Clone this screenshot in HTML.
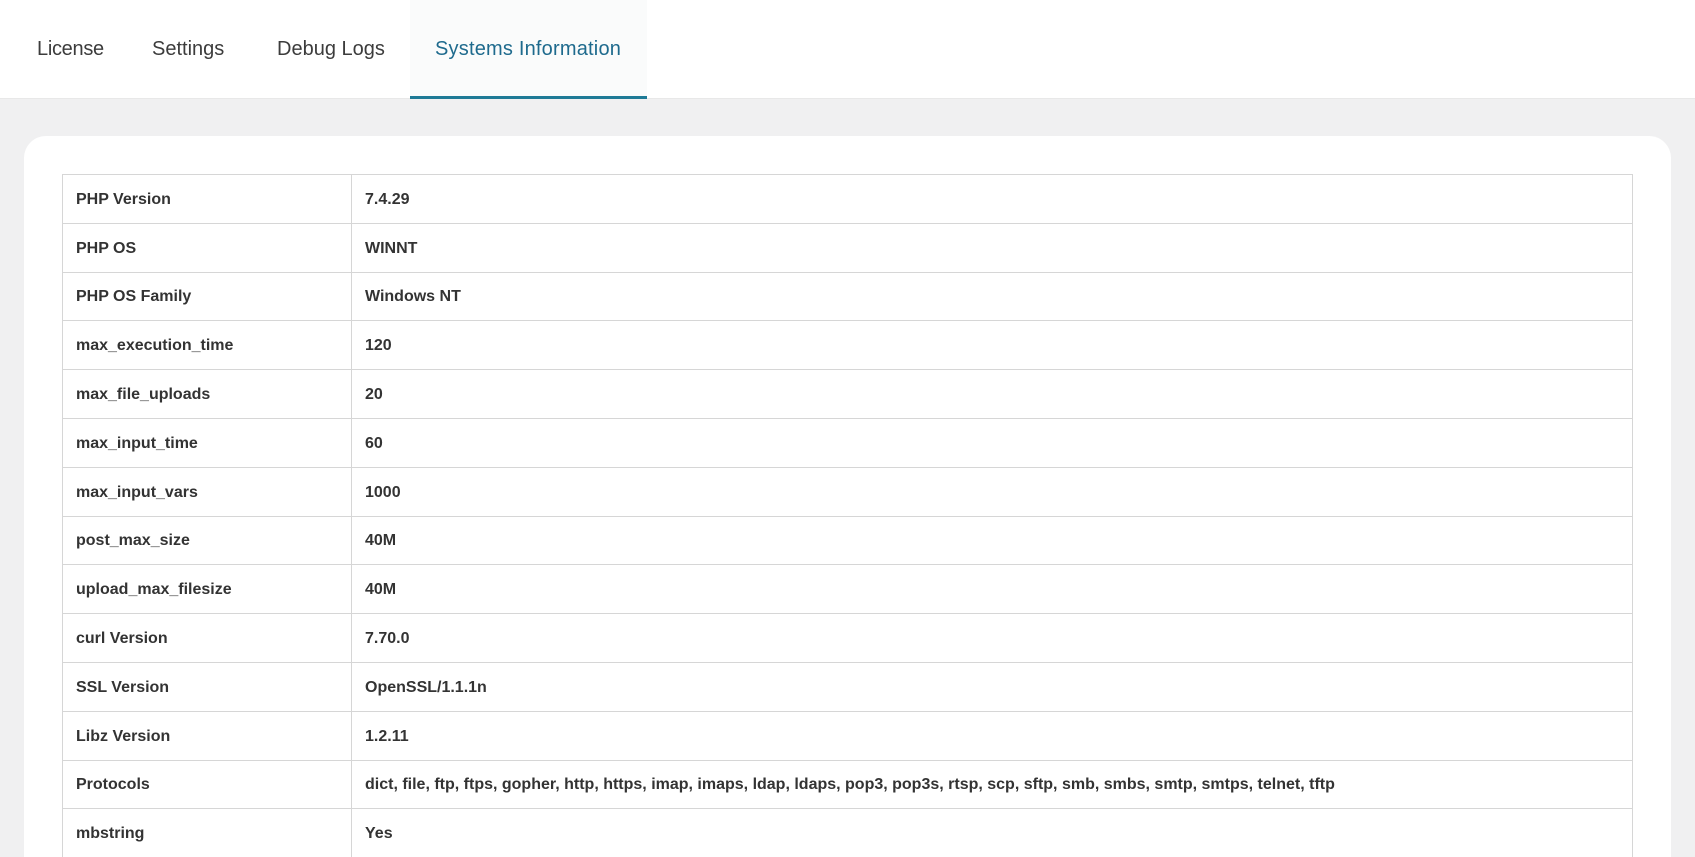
<!DOCTYPE html>
<html style="height:857px;overflow:hidden"><head><meta charset="utf-8"><style>
*{margin:0;padding:0;box-sizing:border-box}
body{width:1695px;height:857px;overflow:hidden;position:relative;background:#f0f0f1;font-family:"Liberation Sans",sans-serif;color:#333}
.tabs{height:99px;background:#fff;position:relative;border-bottom:1px solid #e8e8e8}
.tab{position:absolute;top:0;height:99px;line-height:98px;font-size:20px;color:#3c3c3c}
.tab.active{background:#fafbfb;color:#1e6a8d;border-bottom:3px solid #1e7a96;padding:0 25px;left:410px;width:237px;letter-spacing:0.2px}
.card{position:absolute;left:24px;top:136px;width:1647px;height:721px;background:#fff;border-radius:22px 22px 0 0;overflow:hidden}
table{position:absolute;left:38px;top:38px;width:1571px;border-collapse:collapse}
td{border:1px solid #d6d6d6;height:48.8px;font-size:16px;font-weight:bold;color:#333;padding:2px 13px 0}
td:first-child{width:289px}
</style></head><body>
<div class="tabs">
<div class="tab" style="left:37px;letter-spacing:-0.3px">License</div>
<div class="tab" style="left:152px">Settings</div>
<div class="tab" style="left:277px">Debug Logs</div>
<div class="tab active">Systems Information</div>
</div>
<div class="card"><table>
<tr><td>PHP Version</td><td>7.4.29</td></tr>
<tr><td>PHP OS</td><td>WINNT</td></tr>
<tr><td>PHP OS Family</td><td>Windows NT</td></tr>
<tr><td>max_execution_time</td><td>120</td></tr>
<tr><td>max_file_uploads</td><td>20</td></tr>
<tr><td>max_input_time</td><td>60</td></tr>
<tr><td>max_input_vars</td><td>1000</td></tr>
<tr><td>post_max_size</td><td>40M</td></tr>
<tr><td>upload_max_filesize</td><td>40M</td></tr>
<tr><td>curl Version</td><td>7.70.0</td></tr>
<tr><td>SSL Version</td><td>OpenSSL/1.1.1n</td></tr>
<tr><td>Libz Version</td><td>1.2.11</td></tr>
<tr><td>Protocols</td><td>dict, file, ftp, ftps, gopher, http, https, imap, imaps, ldap, ldaps, pop3, pop3s, rtsp, scp, sftp, smb, smbs, smtp, smtps, telnet, tftp</td></tr>
<tr><td>mbstring</td><td>Yes</td></tr>
</table></div>
</body></html>
